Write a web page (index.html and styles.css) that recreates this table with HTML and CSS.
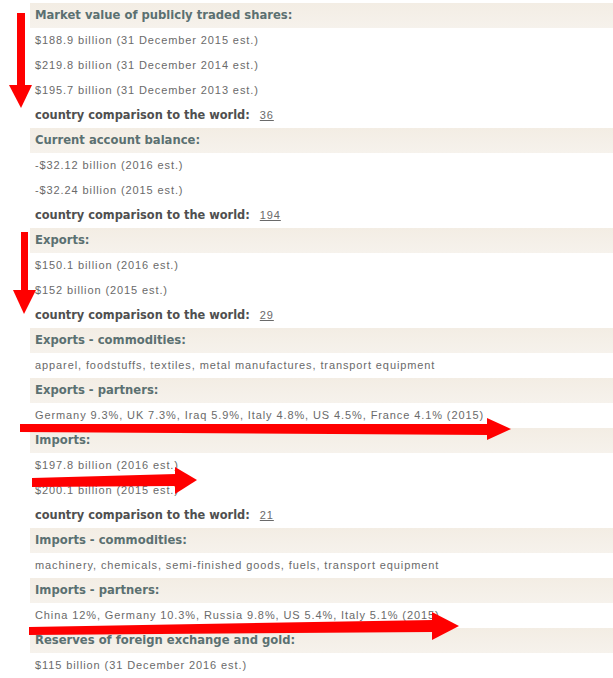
FILE: index.html
```html
<!DOCTYPE html>
<html lang="en">
<head>
  <meta charset="UTF-8" />
  <title>Economy</title>
  <link rel="stylesheet" href="styles.css">
</head>
<body>
  <div class="facts">
    <div class="field-head">Market value of publicly traded shares:</div>
    <div class="field-row">$188.9 billion (31 December 2015 est.)</div>
    <div class="field-row">$219.8 billion (31 December 2014 est.)</div>
    <div class="field-row">$195.7 billion (31 December 2013 est.)</div>
    <div class="field-row"><span class="rank-label">country comparison to the world:</span> <a class="rank" href="#">36</a></div>

    <div class="field-head">Current account balance:</div>
    <div class="field-row">-$32.12 billion (2016 est.)</div>
    <div class="field-row">-$32.24 billion (2015 est.)</div>
    <div class="field-row"><span class="rank-label">country comparison to the world:</span> <a class="rank" href="#">194</a></div>

    <div class="field-head">Exports:</div>
    <div class="field-row">$150.1 billion (2016 est.)</div>
    <div class="field-row">$152 billion (2015 est.)</div>
    <div class="field-row"><span class="rank-label">country comparison to the world:</span> <a class="rank" href="#">29</a></div>

    <div class="field-head">Exports - commodities:</div>
    <div class="field-row">apparel, foodstuffs, textiles, metal manufactures, transport equipment</div>

    <div class="field-head">Exports - partners:</div>
    <div class="field-row">Germany 9.3%, UK 7.3%, Iraq 5.9%, Italy 4.8%, US 4.5%, France 4.1% (2015)</div>

    <div class="field-head">Imports:</div>
    <div class="field-row">$197.8 billion (2016 est.)</div>
    <div class="field-row">$200.1 billion (2015 est.)</div>
    <div class="field-row"><span class="rank-label">country comparison to the world:</span> <a class="rank" href="#">21</a></div>

    <div class="field-head">Imports - commodities:</div>
    <div class="field-row">machinery, chemicals, semi-finished goods, fuels, transport equipment</div>

    <div class="field-head">Imports - partners:</div>
    <div class="field-row">China 12%, Germany 10.3%, Russia 9.8%, US 5.4%, Italy 5.1% (2015)</div>

    <div class="field-head">Reserves of foreign exchange and gold:</div>
    <div class="field-row">$115 billion (31 December 2016 est.)</div>
  </div>

  <!-- hand-drawn markup arrows on top of the screenshot -->
  <svg class="marks" width="613" height="678" viewBox="0 0 613 678">
    <g fill="#f00">
      <rect x="17" y="13" width="8" height="73" />
      <polygon points="9,85 32,85 21,108" />
      <rect x="21" y="232" width="7" height="59" />
      <polygon points="13,290 36,290 24,314" />
      <polygon points="20,424 488,424 488,435 20,432" />
      <polygon points="487,418 511,429 487,440" />
      <polygon points="32,478 176,474 176,486 32,487" />
      <polygon points="175,467 197,480 175,494" />
      <polygon points="29,627 433,620 433,632 29,635" />
      <polygon points="432,612 459,626 432,640" />
    </g>
  </svg>
</body>
</html>
```

FILE: styles.css
```css
body {
  margin: 0;
  padding: 0;
  background-color: #fff;
  position: relative;
}
.facts {
  margin-left: 30px;
  padding-top: 3px;
}
.field-head {
  height: 25px;
  line-height: 25px;
  padding-left: 5px;
  background: linear-gradient(#f3ede4, #f6f2ec);
  font-family: "DejaVu Sans", Verdana, sans-serif;
  font-weight: bold;
  font-size: 11.6px;
  color: #5b7071;
}
.field-row {
  height: 25px;
  line-height: 25px;
  padding-left: 5px;
  font-family: "Liberation Sans", Arial, sans-serif;
  font-size: 11px;
  letter-spacing: 0.9px;
  color: #6a6a6a;
}
.rank-label {
  font-family: "DejaVu Sans", Verdana, sans-serif;
  font-weight: bold;
  font-size: 11.4px;
  letter-spacing: 0;
  color: #4f4f4f;
  margin-right: 6px;
}
.rank {
  color: #6a6a6a;
}
.marks {
  position: absolute;
  top: 0;
  left: 0;
}
```
